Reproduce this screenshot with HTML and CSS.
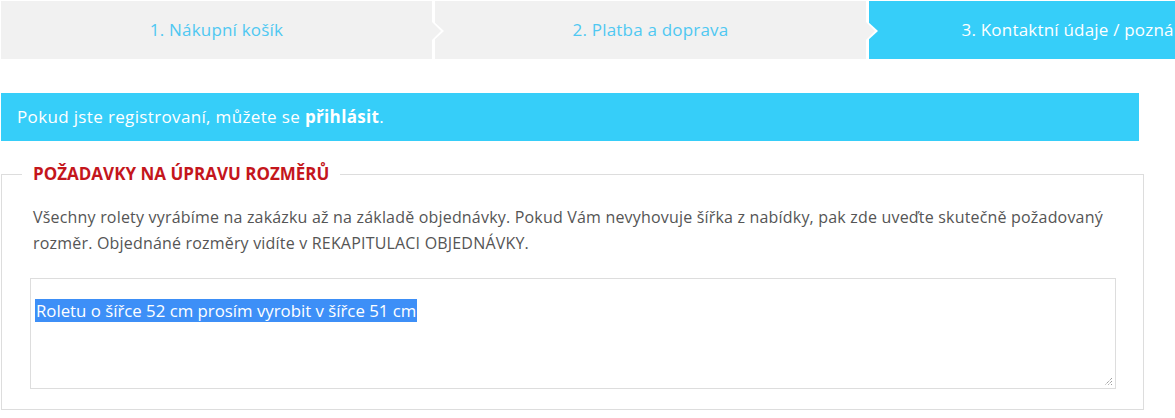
FILE: index.html
```html
<!DOCTYPE html>
<html lang="cs">
<head>
  <meta charset="UTF-8" />
  <meta name="viewport" content="width=device-width, initial-scale=1.0"/>
  <title>Objednávka – kontaktní údaje</title>
  <link rel="stylesheet" href="styles.css">
</head>
<body>
  <div class="page">
    <ol class="steps">
      <li class="step">1. Nákupní košík</li>
      <li class="step">2. Platba a doprava</li>
      <li class="step active">3. Kontaktní údaje / poznámky</li>
    </ol>

    <div class="info">Pokud jste registrovaní, můžete se <strong>přihlásit</strong>.</div>

    <fieldset class="box">
      <legend>Požadavky na úpravu rozměrů</legend>
      <p>Všechny rolety vyrábíme na zakázku až na základě objednávky. Pokud Vám nevyhovuje šířka z nabídky, pak zde uveďte skutečně požadovaný rozměr. Objednáné rozměry vidíte v REKAPITULACI OBJEDNÁVKY.</p>
      <div class="textarea">
        <span class="selected">Roletu o šířce 52 cm prosím vyrobit v šířce 51 cm</span>
        <svg class="grip" width="10" height="10" viewBox="0 0 10 10">
          <path d="M9 2 L2 9 M9 5 L5 9 M9 8 L8 9" stroke="#777" stroke-width="1" stroke-dasharray="1 1" fill="none"/>
        </svg>
      </div>
    </fieldset>
  </div>
</body>
</html>
```

FILE: styles.css
```css
html, body {
  margin: 0;
  padding: 0;
  overflow: hidden;
  background: #fff;
}

body {
  font-family: "Open Sans", Arial, sans-serif;
  font-size: 16px;
  color: #555;
}

.page {
  padding: 1px 0 0 1px;
  width: 1400px;
}

/* kroky objednávky */
.steps {
  display: flex;
  gap: 3px;
  margin: 0;
  padding: 0;
  list-style: none;
}

.step {
  position: relative;
  flex: 0 0 431px;
  height: 58px;
  line-height: 58px;
  text-align: center;
  background: #f1f1f1;
  color: #4fc8f2;
  font-size: 17px;
  letter-spacing: 0.2px;
}

.step::before {
  content: "";
  position: absolute;
  left: 100%;
  top: 19px;
  border-left: 12px solid #fff;
  border-top: 11px solid transparent;
  border-bottom: 11px solid transparent;
  z-index: 1;
}

.step::after {
  content: "";
  position: absolute;
  left: 100%;
  top: 21px;
  border-left: 9px solid #f1f1f1;
  border-top: 9px solid transparent;
  border-bottom: 9px solid transparent;
  z-index: 2;
}

.step.active {
  background: #36cef9;
  color: #fff;
  padding-right: 12px;
}

.step.active::before,
.step.active::after {
  display: none;
}

/* info */
.info {
  width: 1122px;
  margin-top: 34px;
  height: 48px;
  line-height: 48px;
  padding-left: 16px;
  background: #36cef9;
  color: #fff;
  font-size: 17px;
  letter-spacing: 0.35px;
}

.info strong {
  font-weight: 700;
}

/* pole s poznámkou */
.box {
  box-sizing: border-box;
  width: 1143px;
  margin: 21px 0 0 0;
  padding: 0 27px 20px 28px;
  border: 1px solid #ddd;
}

.box legend {
  margin-left: -8px;
  padding: 0 11px;
  line-height: 24px;
  font-size: 17px;
  font-weight: 700;
  text-transform: uppercase;
  color: #c4161c;
}

.box p {
  margin: 18px 0 22px;
  padding: 0 3px;
  line-height: 26px;
  letter-spacing: 0.19px;
}

.textarea {
  position: relative;
  box-sizing: border-box;
  height: 111px;
  padding: 21px 4px 0;
  border: 1px solid #ddd;
  line-height: 21px;
  font-size: 16.8px;
  color: #333;
}

.selected {
  background: #3d8ff7;
  color: #fff;
  padding: 0 1px;
}

.grip {
  position: absolute;
  right: 2px;
  bottom: 2px;
}
```
